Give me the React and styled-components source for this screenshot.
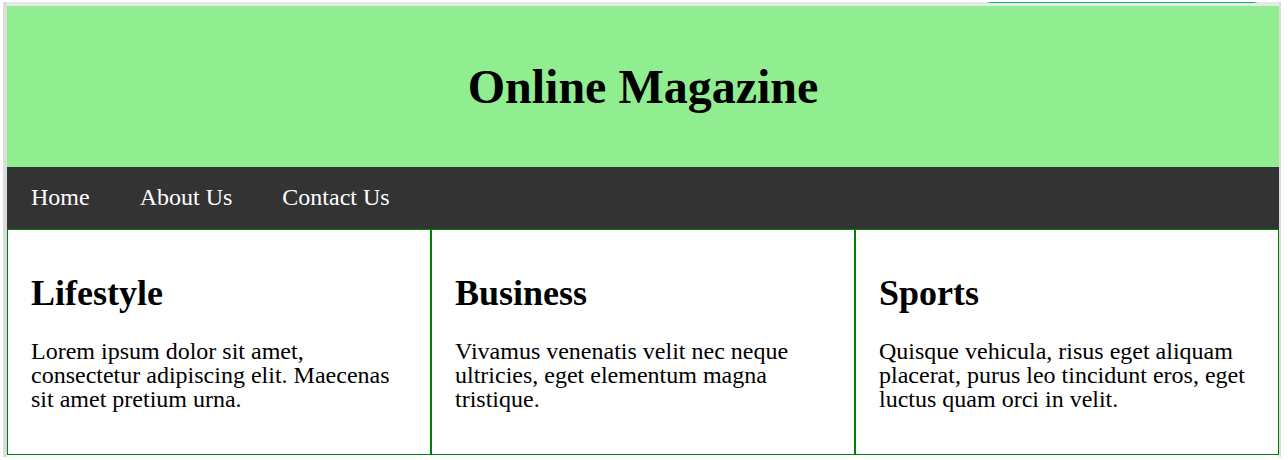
import React from "react";
import styled, { createGlobalStyle } from "styled-components";

const GlobalStyle = createGlobalStyle`
  * { box-sizing: border-box; }
  body {
    margin: 0;
    background: #fff;
    color: #000;
    font-family: "Liberation Serif", "Times New Roman", serif;
    font-size: 24px;
    line-height: 24px;
  }
`;

const Frame = styled.div`
  margin: 2px 7px 0 3px;
  padding-bottom: 2px;
  border: solid #dcdcde;
  border-width: 0 2px 0 4px;
`;

const TopStrip = styled.div`
  height: 4px;
  padding-right: 21px;
  display: flex;
  justify-content: flex-end;
  background: #e6e8eb;
`;

const Tab = styled.div`
  width: 272px;
  height: 1px;
  background: linear-gradient(to right, transparent, #0cab7c 5px, #0cab7c calc(100% - 5px), transparent);
`;

const Header = styled.header`
  background: #90ee90;
  padding: 56px 24px;
  text-align: center;
`;

const Title = styled.h1`
  margin: 0;
  font-size: 48px;
  line-height: 49px;
`;

const Nav = styled.nav`
  display: flex;
  gap: 50px;
  padding: 18px 24px 20px;
  background: #333;
`;

const NavLink = styled.a`
  color: #fff;
  text-decoration: none;
`;

const Columns = styled.main`
  display: grid;
  grid-template-columns: repeat(3, 1fr);
`;

const Article = styled.article`
  border: 1px solid #008000;
  padding: 45px 23px 43px;
`;

const Heading = styled.h2`
  margin: 0 0 27px;
  font-size: 36px;
  line-height: 37px;
`;

const Text = styled.p`
  margin: 0;
`;

const links = ["Home", "About Us", "Contact Us"];

const articles = [
  {
    title: "Lifestyle",
    text: "Lorem ipsum dolor sit amet, consectetur adipiscing elit. Maecenas sit amet pretium urna.",
  },
  {
    title: "Business",
    text: "Vivamus venenatis velit nec neque ultricies, eget elementum magna tristique.",
  },
  {
    title: "Sports",
    text: "Quisque vehicula, risus eget aliquam placerat, purus leo tincidunt eros, eget luctus quam orci in velit.",
  },
];

export default function App() {
  return (
    <>
      <GlobalStyle />
      <Frame>
        <TopStrip>
          <Tab />
        </TopStrip>
        <Header>
          <Title>Online Magazine</Title>
        </Header>
        <Nav>
          {links.map((label) => (
            <NavLink key={label} href="#">{label}</NavLink>
          ))}
        </Nav>
        <Columns>
          {articles.map(({ title, text }) => (
            <Article key={title}>
              <Heading>{title}</Heading>
              <Text>{text}</Text>
            </Article>
          ))}
        </Columns>
      </Frame>
    </>
  );
}
